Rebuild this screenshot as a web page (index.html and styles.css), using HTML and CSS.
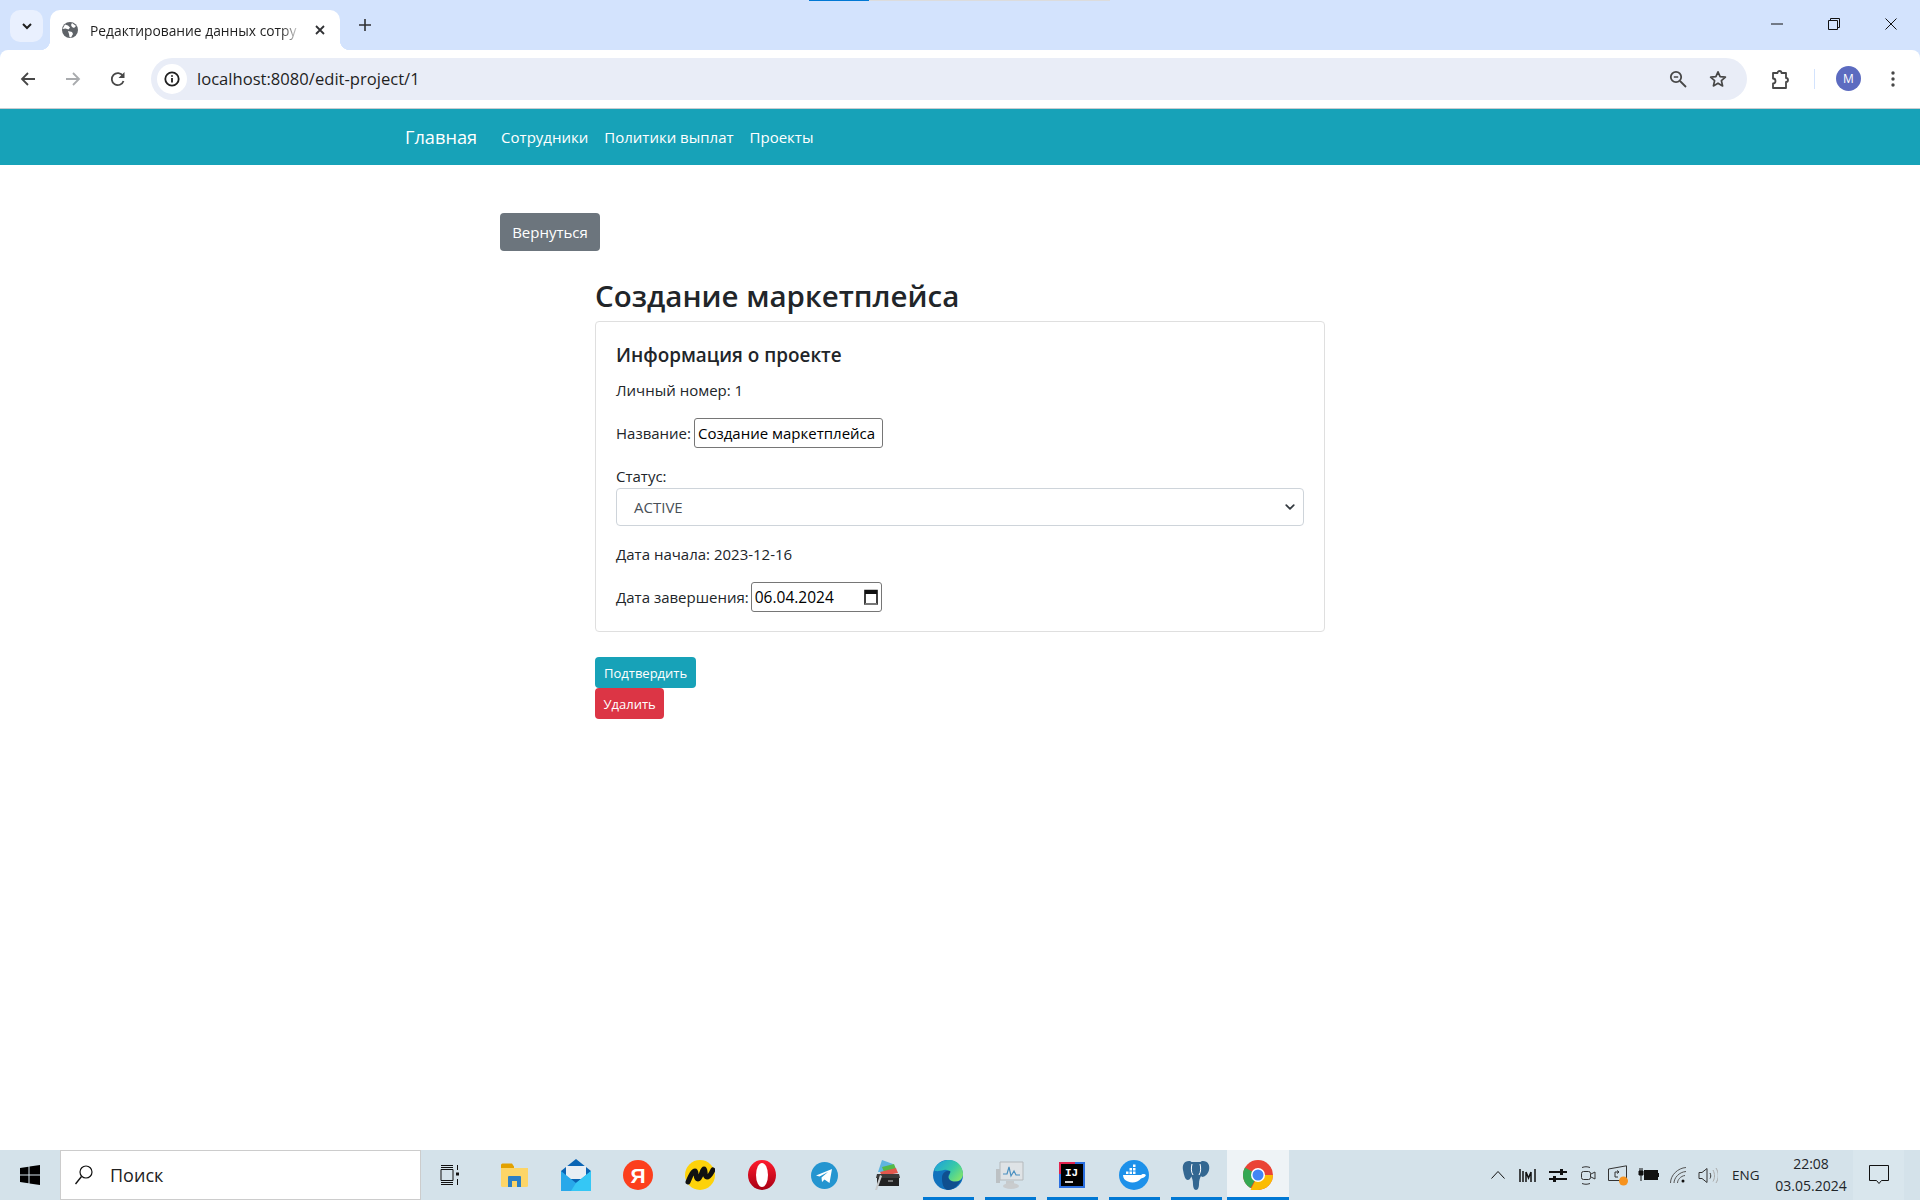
FILE: index.html
```html
<!DOCTYPE html>
<html lang="ru">
<head>
  <meta charset="UTF-8" />
  <title>Редактирование данных сотрудника</title>
  <link rel="stylesheet" href="styles.css">
</head>
<body>

<!-- Browser chrome -->
<div class="tabstrip">
  <span class="tab-progress"></span>
  <div class="tab-search">
    <svg width="12" height="12" viewBox="0 0 12 12"><path d="M2 4l4 4 4-4" fill="none" stroke="#1f1f1f" stroke-width="2"/></svg>
  </div>
  <div class="tab">
    <svg width="16" height="16" viewBox="0 0 16 16"><circle cx="8" cy="8" r="8" fill="#5f6368"/><path d="M3 2.500l3 1 2 2-1.500 2-3-1-3 .5zM10 1l4 3-2 2-2-1-1-2zM6 9l4 1 1 2-2 3.500-1.500-.5-.5-3z" fill="#fff"/></svg>
    <span class="tab-title">Редактирование данных сотру</span>
    <svg width="12" height="12" viewBox="0 0 12 12"><path d="M2 2l8 8M10 2l-8 8" stroke="#303134" stroke-width="1.800"/></svg>
  </div>
  <svg class="tab-new" width="14" height="14" viewBox="0 0 14 14"><path d="M7 1v12M1 7h12" stroke="#303134" stroke-width="1.600"/></svg>
  <div class="win-buttons">
    <svg width="12" height="12" viewBox="0 0 12 12"><path d="M0 6h12" stroke="#111" stroke-width="1"/></svg>
    <svg width="12" height="12" viewBox="0 0 12 12"><path d="M.5 2.500h9v9h-9zM2.500 2.500v-2h9v9h-2" fill="none" stroke="#111"/></svg>
    <svg width="12" height="12" viewBox="0 0 12 12"><path d="M.5.500l11 11M11.500.5l-11 11" stroke="#111"/></svg>
  </div>
</div>

<div class="toolbar">
  <svg class="tool-icon" width="16" height="16" viewBox="0 0 16 16"><path d="M15 8H2M8 2L2 8l6 6" fill="none" stroke="#474747" stroke-width="1.800"/></svg>
  <svg class="tool-icon" width="16" height="16" viewBox="0 0 16 16"><path d="M1 8h13M8 2l6 6-6 6" fill="none" stroke="#a9abae" stroke-width="1.800"/></svg>
  <svg class="tool-icon" width="16" height="16" viewBox="0 0 16 16"><path d="M13.500 10a6 6 0 1 1-.6-5" fill="none" stroke="#474747" stroke-width="1.800"/><path d="M14.500 1v6h-6z" fill="#474747"/></svg>
  <div class="omnibox">
    <span class="site-info">
      <svg width="16" height="16" viewBox="0 0 16 16"><circle cx="8" cy="8" r="6.700" fill="none" stroke="#1f1f1f" stroke-width="1.800"/><path d="M8 7v4.500M8 4.300v1.500" stroke="#1f1f1f" stroke-width="1.800"/></svg>
    </span>
    <span class="url">localhost:8080/edit-project/1</span>
    <svg class="omni-zoom" width="18" height="18" viewBox="0 0 18 18"><circle cx="7" cy="7" r="5.200" fill="none" stroke="#474747" stroke-width="1.800"/><path d="M11 11l6 6" stroke="#474747" stroke-width="1.800"/><path d="M4.800 7h4.400" stroke="#474747" stroke-width="1.500"/></svg>
    <svg class="omni-star" width="18" height="18" viewBox="0 0 18 18"><path d="M9 1.800l2.100 4.900 5.300.5-4 3.500 1.200 5.200L9 13.200l-4.600 2.700 1.200-5.200-4-3.500 5.300-.5z" fill="none" stroke="#474747" stroke-width="1.700" stroke-linejoin="round"/></svg>
  </div>
  <svg class="ext-icon" width="18" height="20" viewBox="0 0 18 20"><path d="M1 4h4.500a2 2 0 0 1 4 0H14v5a2 2 0 0 1 0 4v6H1v-4.500a2.500 2.500 0 0 0 0-5z" fill="none" stroke="#474747" stroke-width="1.800" stroke-linejoin="round"/></svg>
  <span class="tool-sep"></span>
  <span class="avatar">M</span>
  <svg class="menu-dots" width="4" height="18" viewBox="0 0 4 18"><circle cx="2" cy="3" r="1.700" fill="#474747"/><circle cx="2" cy="9" r="1.700" fill="#474747"/><circle cx="2" cy="15" r="1.700" fill="#474747"/></svg>
</div>

<!-- Page -->
<nav class="navbar">
  <a class="navbar-brand">Главная</a>
  <a class="nav-link">Сотрудники</a>
  <a class="nav-link">Политики выплат</a>
  <a class="nav-link">Проекты</a>
</nav>

<main class="page">
  <button class="btn btn-back">Вернуться</button>
  <div class="project">
    <h1>Создание маркетплейса</h1>
    <div class="card">
      <h2>Информация о проекте</h2>
      <p>Личный номер: 1</p>
      <p class="field">Название: <input class="plain-input name-input" type="text" value="Создание маркетплейса"></p>
      <label class="status-label">Статус:</label>
      <div class="select">
        <span>ACTIVE</span>
        <svg width="10" height="10" viewBox="0 0 16 16"><path d="M2 5l6 6 6-6" fill="none" stroke="#343a40" stroke-width="2.800" stroke-linecap="round" stroke-linejoin="round"/></svg>
      </div>
      <p class="start-date">Дата начала: 2023-12-16</p>
      <p class="field">Дата завершения:
        <span class="plain-input date-input">06.04.2024
          <svg width="14" height="16" viewBox="0 0 14 16"><path d="M1 1.500h12v13.500h-12z" fill="none" stroke="#111" stroke-width="1.600"/><path d="M1 1h12v4H1z" fill="#111"/><path d="M1 15h12" stroke="#777" stroke-width="2"/></svg>
        </span>
      </p>
    </div>
    <div class="actions">
      <button class="btn btn-sm btn-info">Подтвердить</button>
      <button class="btn btn-sm btn-danger">Удалить</button>
    </div>
  </div>
</main>

<!-- Windows taskbar -->
<footer class="taskbar">
  <svg class="start" width="20" height="20" viewBox="0 0 20 20"><path d="M0 3l8.500-1.200V9.500H0zM9.500 1.600L20 0v9.500H9.500zM0 10.500h8.500v7.700L0 17zM9.500 10.500H20V20L9.500 18.400z" fill="#000"/></svg>
  <div class="search-box">
    <svg width="18" height="20" viewBox="0 0 18 20"><circle cx="11" cy="7" r="6" fill="none" stroke="#111" stroke-width="1.200"/><path d="M6.500 11.500L.5 19" stroke="#111" stroke-width="1.400"/></svg>
    <span>Поиск</span>
  </div>
  <div class="task-icons">
    <span class="task-item">
      <svg class="task-view" width="20" height="22" viewBox="0 0 20 22"><path d="M1 5.500h12v11H1zM1 1.500h12M1 20.500h12M1 18.500h12M1 3.500h12M17.500 1v5M17.500 15v6" fill="none" stroke="#111"/><rect x="16" y="8.500" width="3" height="3" fill="#111"/></svg>
    </span>
    <span class="task-item">
      <svg width="27" height="24" viewBox="0 0 27 24"><path d="M0 2a1.500 1.500 0 0 1 1.500-1.500H11l2 3v3H0z" fill="#e2a100"/><path d="M0 5h27v17.500a1.500 1.500 0 0 1-1.500 1.500h-24A1.500 1.500 0 0 1 0 22.500z" fill="#fdd567"/><path d="M7 24V14a1 1 0 0 1 1-1h11a1 1 0 0 1 1 1v10h-4v-6h-5v6z" fill="#2d7fc4"/></svg>
    </span>
    <span class="task-item">
      <svg width="30" height="32" viewBox="0 0 30 32"><path d="M0 12L15 0l15 12v20H0z" fill="#0a64b4"/><path d="M5 7h20v13H5z" fill="#e8eef4"/><path d="M0 12l15 12 15-12v20H0z" fill="#28a8ea"/><path d="M15 24l15-12v20H10z" fill="#35c7f5"/></svg>
    </span>
    <span class="task-item">
      <svg width="30" height="30" viewBox="0 0 30 30"><circle cx="15" cy="15" r="15" fill="#fc3f1d"/><text x="15" y="23" class="ya">Я</text></svg>
    </span>
    <span class="task-item">
      <svg width="30" height="30" viewBox="0 0 30 30"><circle cx="15" cy="15" r="15" fill="#fdd20a"/><path d="M3 22c3-7 5-11 7-11s0 8 3 8 4-10 6-10 0 8 3 8 4-4 6-7" fill="none" stroke="#111" stroke-width="5" stroke-linecap="round" stroke-linejoin="round"/></svg>
    </span>
    <span class="task-item">
      <svg width="28" height="30" viewBox="0 0 28 30"><defs><linearGradient id="opera" x1="0" y1="0" x2="0" y2="1"><stop offset="0" stop-color="#ff1b2d"/><stop offset="1" stop-color="#a70014"/></linearGradient></defs><ellipse cx="14" cy="15" rx="14" ry="15" fill="url(#opera)"/><ellipse cx="14" cy="15" rx="6" ry="12" fill="#fff"/></svg>
    </span>
    <span class="task-item">
      <svg width="27" height="27" viewBox="0 0 27 27"><circle cx="13.500" cy="13.500" r="13.500" fill="#2495d0"/><path d="M5 13.500l16-6.500-2.500 14-5-3.500-2.500 2.500-.5-4.500 6.500-5.500-8.500 4.500z" fill="#fff"/></svg>
    </span>
    <span class="task-item">
      <svg width="27" height="30" viewBox="0 0 27 30"><path d="M5 12L9 0l11 4-3 8z" fill="#5fb4e0"/><path d="M9 7l12-3 2 5-12 3z" fill="#54b948"/><path d="M7 12l16-4 2 5-16 3z" fill="#e2574c"/><path d="M4 14h22v12H4z" fill="#222"/><path d="M4 14h22l1 4H3z" fill="#3a3a3a"/><path d="M2 30l5-15 2 1-5 14z" fill="#c9cbcc"/><rect x="15" y="20" width="5" height="2" fill="#777"/></svg>
    </span>
    <span class="task-item open">
      <svg width="30" height="30" viewBox="0 0 30 30"><defs><linearGradient id="edge" x1="0" y1="0" x2="1" y2=".7"><stop offset="0" stop-color="#1b9de2"/><stop offset=".6" stop-color="#37c9a7"/><stop offset="1" stop-color="#7de36f"/></linearGradient></defs><circle cx="15" cy="15" r="15" fill="#1172bd"/><path d="M1 10C4 2 12 0 16 0c8 0 14 6 14 14 0 5-4 8-9 8-4 0-6-2-6-4 0-2 2-3 2-5 0-2-3-4-6-3-5 1-8 2-10 0z" fill="url(#edge)"/><path d="M9 18c0-5 4-8 8-7 1 1 0 2-1 3-1 2-1 4 1 6 3 2 8 2 11 0-3 6-8 10-13 10-5-1-6-7-6-12z" fill="#0f4f8f"/></svg>
    </span>
    <span class="task-item open">
      <svg width="28" height="28" viewBox="0 0 28 28"><path d="M4 1h23v18H4z" fill="#dfe3e6" stroke="#b4b9bc"/><path d="M7 13h4l2-7 2 9 3-5 2 4h4" fill="none" stroke="#4a90c0" stroke-width="1.200"/><path d="M0 8h4v14H0z" fill="#bcc1c4"/><path d="M10 20h8v3h-8z" fill="#c6cacc"/><ellipse cx="15" cy="25" rx="8" ry="3" fill="#c9ccce"/></svg>
    </span>
    <span class="task-item open">
      <svg width="26" height="26" viewBox="0 0 26 26"><rect width="26" height="26" fill="#2b6fe0"/><rect width="16" height="12" fill="#e2224f"/><rect x="2" y="2" width="22" height="22" fill="#000"/><text x="6" y="14" class="ij">IJ</text><path d="M6 20h8" stroke="#fff" stroke-width="1.600"/></svg>
    </span>
    <span class="task-item open">
      <svg width="30" height="30" viewBox="0 0 30 30"><circle cx="15" cy="15" r="15" fill="#1d91ea"/><path d="M4 15h18c1-1.500 4-1.500 5 0-1 2.500-3 3-5 3.500-3 4-9 5-13 3-3-1-5-3-5-6.500z" fill="#fff"/><path d="M7 11.500h2.500V14H7zM10.500 11.500H13V14h-2.500zM14 11.500h2.500V14H14zM10.500 8H13v2.500h-2.500zM14 8h2.500v2.500H14zM14 4.500h2.500V7H14z" fill="#fff"/></svg>
    </span>
    <span class="task-item open">
      <svg width="28" height="30" viewBox="0 0 28 30"><path d="M7 1C2 1 0 5 1 10c1 5 2 10 5 10 2 0 3-3 4-5V3C9 1 8 1 7 1zM21 1c5 0 7 4 6 9-1 4-4 7-7 7l-2-2V3c1-2 2-2 3-2z" fill="#336791"/><path d="M9 2h10v14c-1 2-2 4-2 8 0 3-1 6-3 6s-3-3-3-6c0-4-1-6-2-8z" fill="#336791"/><path d="M10 4c-1 4-1 8 1 11M18 4c1 4 1 8-1 11" fill="none" stroke="#fff" stroke-width="1"/></svg>
    </span>
    <span class="task-item open active">
      <svg width="30" height="30" viewBox="0 0 30 30"><circle cx="15" cy="15" r="15" fill="#ea4335"/><path d="M15 15L2 7.500a15 15 0 0 0 5.500 20.500z" fill="#34a853"/><path d="M15 15h15a15 15 0 0 1-15 15H7.500z" fill="#fbbc04"/><circle cx="15" cy="15" r="7" fill="#fff"/><circle cx="15" cy="15" r="5.500" fill="#4285f4"/></svg>
    </span>
  </div>
  <div class="tray">
    <span class="tray-icon"><svg width="14" height="8" viewBox="0 0 14 8"><path d="M.5 7.500l6.500-7 6.500 7" fill="none" stroke="#111"/></svg></span>
    <span class="tray-icon"><svg width="18" height="13" viewBox="0 0 18 13"><path d="M1 0v13M4 2v11M7 3l2.500 6L12 3M7 3v10M12 3v10M16 0v13" fill="none" stroke="#111" stroke-width="1.500"/></svg></span>
    <span class="tray-icon"><svg width="18" height="15" viewBox="0 0 18 15"><path d="M0 4h18M0 11h18" stroke="#111" stroke-width="2"/><rect x="11" y="1" width="3" height="6" fill="#111"/><rect x="4" y="8" width="3" height="6" fill="#111"/></svg></span>
    <span class="tray-icon"><svg width="15" height="19" viewBox="0 0 15 19"><path d="M1 1.500c3-1 5-1 8 0M1 17.500c3 1 5 1 8 0" fill="none" stroke="#333"/><rect x=".5" y="5.500" width="9" height="8" rx="2" fill="none" stroke="#333"/><path d="M10 8l4-2v7l-4-2" fill="none" stroke="#333"/></svg></span>
    <span class="tray-icon"><svg width="22" height="21" viewBox="0 0 22 21"><path d="M1.500 4L19.500.8v14.700H1.500z" fill="none" stroke="#333"/><path d="M12 7H8v5h3M10 5.500l2 1.500-2 1.500" fill="none" stroke="#333"/><circle cx="16.500" cy="16" r="4.500" fill="#f7931e"/></svg></span>
    <span class="tray-icon"><svg width="21" height="14" viewBox="0 0 21 14"><path d="M2 0v3M4 0v3M1 3h4v4H1zM3 7v6" fill="#111" stroke="#111"/><rect x="6.500" y="2.500" width="13" height="9" fill="#111" stroke="#111"/><rect x="20" y="5" width="1" height="4" fill="#111"/></svg></span>
    <span class="tray-icon"><svg width="17" height="16" viewBox="0 0 17 16"><path d="M.5 16C.5 8 8 1 16 .5M4 16c0-5 5-11 12-11.500M7.500 16c0-3 3-7 7.500-7.500" fill="none" stroke="#555"/><circle cx="13" cy="14" r="1.500" fill="#111"/></svg></span>
    <span class="tray-icon"><svg width="20" height="17" viewBox="0 0 20 17"><path d="M1 5.500h3l5-4v14l-5-4H1z" fill="none" stroke="#333"/><path d="M12 6c1 2 1 4 0 5.500" fill="none" stroke="#333"/><path d="M15 3c2 4 2 8 0 11.500M18 1c3 5 3 10 0 15" fill="none" stroke="#aaa"/></svg></span>
    <span class="tray-lang">ENG</span>
    <span class="tray-clock"><span>22:08</span><span>03.05.2024</span></span>
    <span class="tray-notify">
      <svg width="20" height="20" viewBox="0 0 20 20"><path d="M.5.500h19v15h-7l-2.500 3-2.500-3h-7z" fill="none" stroke="#111"/></svg>
    </span>
  </div>
</footer>

</body>
</html>
```

FILE: styles.css
```css
* {
  box-sizing: border-box;
}
body {
  margin: 0;
  height: 1200px;
  overflow: hidden;
  display: flex;
  flex-direction: column;
  font-family: "Open Sans", "Noto Sans", Arial, sans-serif;
  font-size: 15px;
  color: #212529;
  background-color: #d3e3fd;
}

/* tab strip */
.tabstrip {
  position: relative;
  height: 50px;
  flex: none;
  display: flex;
  align-items: flex-start;
  padding: 10px 0 0 10px;
}
.tab-progress {
  position: absolute;
  top: 0;
  left: 809px;
  width: 301px;
  height: 1px;
  background: linear-gradient(to right, #0078d4 60px, #dcdcdc 60px);
}
.tab-search {
  width: 33px;
  height: 32px;
  border-radius: 10px;
  background-color: #e9f0fe;
  display: flex;
  align-items: center;
  justify-content: center;
}
.tab {
  position: relative;
  width: 290px;
  height: 40px;
  margin-left: 7px;
  padding: 0 14px 0 12px;
  display: flex;
  align-items: center;
  gap: 12px;
  background-color: #fff;
  border-radius: 10px 10px 0 0;
}
.tab::before,
.tab::after {
  content: "";
  position: absolute;
  bottom: 0;
  width: 10px;
  height: 10px;
}
.tab::before {
  left: -10px;
  background: radial-gradient(circle at 0 0, transparent 10px, #fff 10.5px);
}
.tab::after {
  right: -10px;
  background: radial-gradient(circle at 100% 0, transparent 10px, #fff 10.5px);
}
.tab-title {
  width: 212px;
  font-size: 13.8px;
  white-space: nowrap;
  color: #1f1f1f;
  -webkit-mask-image: linear-gradient(to right, #000 90%, transparent);
  mask-image: linear-gradient(to right, #000 90%, transparent);
}
.tab-new {
  margin: 8px 0 0 18px;
}
.win-buttons {
  margin-left: auto;
  display: flex;
  gap: 45px;
  padding: 8px 23px 0 0;
}

/* toolbar */
.toolbar {
  height: 59px;
  flex: none;
  display: flex;
  align-items: center;
  padding: 0 0 1px 20px;
  background-color: #fff;
  border-bottom: 1px solid #c8ccd0;
  border-radius: 8px 8px 0 0;
}
.tool-icon {
  margin-right: 29px;
}
.omnibox {
  width: 1596px;
  height: 42px;
  margin-left: -4px;
  display: flex;
  align-items: center;
  padding: 0 20px 0 6px;
  background-color: #e9edf7;
  border-radius: 21px;
}
.site-info {
  width: 30px;
  height: 30px;
  flex: none;
  display: flex;
  align-items: center;
  justify-content: center;
  background-color: #fff;
  border-radius: 50%;
}
.url {
  margin-left: 10px;
  font-size: 16.6px;
  color: #1f1f1f;
}
.omni-zoom {
  margin-left: auto;
}
.omni-star {
  margin-left: 22px;
}
.ext-icon {
  margin-left: 25px;
}
.tool-sep {
  width: 1px;
  height: 20px;
  margin-left: 24px;
  background-color: #d3e3fd;
}
.avatar {
  width: 25px;
  height: 25px;
  margin-left: 21px;
  border-radius: 50%;
  background-color: #5c6bc0;
  color: #fff;
  font-size: 12px;
  display: flex;
  align-items: center;
  justify-content: center;
}
.menu-dots {
  margin-left: 30px;
}

/* navbar */
.navbar {
  height: 56px;
  flex: none;
  display: flex;
  align-items: center;
  padding-left: 405px;
  background-color: #17a2b8;
}
.navbar a {
  color: #fff;
}
.navbar-brand {
  font-size: 18.2px;
  margin-right: 24px;
  font-weight: 500;
}
.nav-link {
  font-size: 15px;
  margin-right: 16px;
}

/* page */
.page {
  flex: 1;
  padding: 48px 0 0 500px;
  background-color: #fff;
}
.btn {
  display: block;
  border: none;
  color: #fff;
  font-family: inherit;
  border-radius: 4px;
}
.btn-back {
  width: 100px;
  height: 38px;
  background-color: #6c757d;
  font-size: 15px;
}
.project {
  width: 730px;
  margin: 22px 0 0 95px;
}
h1 {
  margin: 0;
  height: 48px;
  font-size: 29.5px;
  font-weight: 600;
  line-height: 46px;
}
.card {
  height: 311px;
  padding: 20px;
  border: 1px solid #dfdfdf;
  border-radius: 4px;
}
h2 {
  margin: 1px 0 12px;
  font-size: 18.9px;
  font-weight: 600;
  line-height: 24px;
}
.card p {
  margin: 0 0 16px;
  line-height: 23px;
}
.field {
  display: flex;
  align-items: center;
  gap: 3px;
}
.plain-input {
  height: 30px;
  border: 1px solid #767676;
  border-radius: 3px;
  padding: 0 3px;
  font-family: inherit;
  font-size: 15px;
  color: #000;
  background-color: #fff;
}
.name-input {
  width: 189px;
}
.date-input {
  width: 131px;
  margin-left: -1px;
  display: flex;
  align-items: center;
  justify-content: space-between;
  font-size: 15.5px;
}
.status-label {
  display: block;
  padding-top: 1px;
  line-height: 23px;
}
.select {
  height: 38px;
  display: flex;
  align-items: center;
  justify-content: space-between;
  padding: 0 8px 0 17px;
  border: 1px solid #ced4da;
  border-radius: 4px;
  color: #495057;
}
.card .start-date {
  margin: 17px 0 16px;
}
.actions {
  margin-top: 25px;
}
.btn-sm {
  height: 31px;
  padding: 0 8.5px;
  font-size: 13px;
}
.btn-info {
  padding: 0 9px;
  background-color: #17a2b8;
}
.btn-danger {
  background-color: #dc3545;
}

/* taskbar */
.taskbar {
  height: 50px;
  flex: none;
  display: flex;
  align-items: center;
  background-color: #d4e2ea;
}
.start {
  margin-left: 20px;
  flex: none;
}
.search-box {
  width: 361px;
  height: 50px;
  margin-left: 20px;
  flex: none;
  display: flex;
  align-items: center;
  gap: 17px;
  padding-left: 14px;
  background-color: #fff;
  border: 1px solid #ccc;
  font-size: 18px;
  color: #222;
}
.task-icons {
  display: flex;
}
.task-item {
  width: 62px;
  height: 50px;
  display: flex;
  align-items: center;
  justify-content: center;
}
.task-item.open {
  background: linear-gradient(#0078d4, #0078d4) center bottom / 51px 3px no-repeat;
}
.task-item.active {
  background: linear-gradient(#0078d4, #0078d4) center bottom / 100% 3px no-repeat, #eef3f6;
}
.task-view {
  margin-right: 4px;
}
.ya {
  font-size: 21px;
  font-weight: 700;
  fill: #fff;
  text-anchor: middle;
  font-family: "Liberation Sans", sans-serif;
}
.ij {
  font-size: 11px;
  font-weight: 700;
  fill: #fff;
  font-family: "Liberation Mono", monospace;
}
.tray {
  margin-left: auto;
  height: 50px;
  display: flex;
  align-items: center;
  padding-right: 16px;
}
.tray-icon {
  width: 30px;
  display: flex;
  justify-content: center;
}
.tray-lang {
  width: 27px;
  margin-left: 9px;
  font-size: 13.5px;
  white-space: nowrap;
}
.tray-clock {
  width: 84px;
  margin-left: 10px;
  display: flex;
  flex-direction: column;
  align-items: center;
  font-size: 14px;
  line-height: 22px;
}
.tray-notify {
  width: 51px;
  height: 50px;
  display: flex;
  align-items: center;
  justify-content: center;
  background-color: #d9e6ed;
}
```
